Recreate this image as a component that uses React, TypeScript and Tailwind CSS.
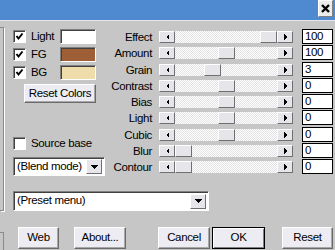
import React from "react";

const raised =
  "border border-t-white border-l-white border-r-[#707070] border-b-[#707070] bg-[#e6e6ea]";
const sunken =
  "border border-t-[#808080] border-l-[#808080] border-r-white border-b-white shadow-[inset_1px_1px_0_#404040]";

type Row = { label: string; value: string; thumb: number; h: string };

// thumb = px offset of the thumb inside the 102px track
const rows: Row[] = [
  { label: "Effect", value: "100", thumb: 85, h: "h-[16px]" },
  { label: "Amount", value: "100", thumb: 43, h: "h-[17px]" },
  { label: "Grain", value: "3", thumb: 29, h: "h-[16px]" },
  { label: "Contrast", value: "0", thumb: 43, h: "h-[16px]" },
  { label: "Bias", value: "0", thumb: 43, h: "h-[16px]" },
  { label: "Light", value: "0", thumb: 43, h: "h-[17px]" },
  { label: "Cubic", value: "0", thumb: 43, h: "h-[16px]" },
  { label: "Blur", value: "0", thumb: 0, h: "h-[16px]" },
  { label: "Contour", value: "0", thumb: 0, h: "h-[16px]" },
];

function Arrow({ dir }: { dir: "left" | "right" | "down" }) {
  const pts =
    dir === "left" ? "3,0 3,6 0,3" : dir === "right" ? "0,0 0,6 3,3" : "0,0 7,0 3.5,4";
  const w = dir === "down" ? 7 : 3;
  const h = dir === "down" ? 4 : 6;
  return (
    <svg width={w} height={h} viewBox={`0 0 ${w} ${h}`} shapeRendering="crispEdges">
      <polygon points={pts} fill="#000" />
    </svg>
  );
}

function Checkbox({ checked }: { checked?: boolean }) {
  return (
    <div className={`flex h-[13px] w-[13px] shrink-0 items-center justify-center bg-white ${sunken}`}>
      {checked && (
        <svg width="9" height="9" viewBox="0 0 9 9">
          <polyline points="1.5,4 3.5,6.5 7.5,1.5" fill="none" stroke="#000" strokeWidth="2" />
        </svg>
      )}
    </div>
  );
}

function Swatch({ color }: { color: string }) {
  return <div className={`h-[15px] w-[36px] ${sunken} ${color}`} />;
}

function Dropdown({ text, width, h }: { text: string; width: string; h: string }) {
  return (
    <div className={`flex items-center bg-white pl-[3px] pr-[2px] ${sunken} ${width} ${h}`}>
      <span className="flex-1 whitespace-nowrap leading-none">{text}</span>
      <div className={`flex h-[15px] w-[16px] items-center justify-center ${raised}`}>
        <Arrow dir="down" />
      </div>
    </div>
  );
}

function Slider({ thumb }: { thumb: number }) {
  return (
    <div className="mt-[2px] flex h-[12px] w-[134px]">
      <div className={`flex w-[16px] items-center justify-center ${raised}`}>
        <Arrow dir="left" />
      </div>
      <div className="flex w-[102px] bg-[repeating-conic-gradient(#ffffff_0_25%,#e2e2e2_0_50%)] bg-[length:2px_2px]">
        <div className={`h-full w-[17px] ${raised}`} style={{ marginLeft: thumb }} />
      </div>
      <div className={`flex w-[16px] items-center justify-center ${raised}`}>
        <Arrow dir="right" />
      </div>
    </div>
  );
}

function Button({
  label,
  width,
  h = "h-[22px]",
  ml = "",
  main,
}: {
  label: string;
  width: string;
  h?: string;
  ml?: string;
  main?: boolean;
}) {
  return (
    <button
      className={`${h} ${width} ${ml} whitespace-nowrap bg-[#ececf2] leading-none ${
        main
          ? "border border-black shadow-[inset_1px_1px_0_#fff,inset_-1px_-1px_0_#808080]"
          : "border border-t-white border-l-white border-r-[#6a6a6a] border-b-[#6a6a6a] shadow-[inset_-1px_-1px_0_#a8a8a8]"
      }`}
    >
      {label}
    </button>
  );
}

export default function App() {
  return (
    <div className="h-[250px] w-[335px] overflow-hidden bg-[#c6c6c6] font-['Liberation_Sans',Arial,sans-serif] text-[11.5px] tracking-[-0.35px] text-black">
      {/* title bar */}
      <div className="flex h-[21px] justify-end border-b border-[#e4e8ee] bg-[#4f89cf]">
        <div className="mr-[2px] flex h-[17px] w-[15px] items-center justify-center border border-t-white border-l-white border-r-[#808080] border-b-[#808080] bg-[#ececec]">
          <svg width="9" height="9" viewBox="0 0 9 9">
            <path d="M1 1L8 8M8 1L1 8" stroke="#000" strokeWidth="2.4" />
          </svg>
        </div>
      </div>

      <div className="flex">
        {/* edge of neighbouring frame */}
        <div className="mt-[6px] h-[184px] w-[4px] border-y border-r border-[#8a8a8a] shadow-[1px_1px_0_#fff]" />

        <div className="pl-[9px] pt-[8px]">
          <div className="flex">
            {/* left column */}
            <div className="flex w-[92px] flex-col">
              {[
                ["Light", "bg-white"],
                ["FG", "bg-[#9e5e36]"],
                ["BG", "bg-[#eedcab]"],
              ].map(([l, c], i) => (
                <div key={l} className={`flex h-[15px] items-center ${i ? "mt-[3px]" : ""}`}>
                  <Checkbox checked />
                  <span className="ml-[5px] w-[29px] whitespace-nowrap">{l}</span>
                  <Swatch color={c} />
                </div>
              ))}
              <div className="ml-[11px] mt-[4px] flex">
                <Button label="Reset Colors" width="w-[72px]" h="h-[19px]" />
              </div>
              <div className="mt-[34px] flex h-[13px] items-center">
                <Checkbox />
                <span className="ml-[5px] whitespace-nowrap">Source base</span>
              </div>
              <div className="mt-[7px]">
                <Dropdown text="(Blend mode)" width="w-[92px]" h="h-[19px]" />
              </div>
            </div>

            {/* sliders */}
            <div className="flex flex-col">
              {rows.map((r) => (
                <div key={r.label} className={`flex items-start ${r.h}`}>
                  <span className="w-[47px] whitespace-nowrap text-right leading-[16px]">{r.label}</span>
                  <div className="ml-[7px]">
                    <Slider thumb={r.thumb} />
                  </div>
                  <div className="ml-[9px] h-[15px] w-[31px] border border-black bg-white pl-[2px] leading-[13px]">
                    {r.value}
                  </div>
                </div>
              ))}
            </div>
          </div>

          <div className="mt-[15px]">
            <Dropdown text="(Preset menu)" width="w-[196px]" h="h-[20px]" />
          </div>
        </div>
      </div>

      {/* buttons */}
      <div className="mt-[16px] flex">
        <div className="mt-[5px] h-[20px] w-[4px] border-r border-t border-[#8a8a8a]" />
        <Button label="Web" width="w-[41px]" ml="ml-[14px]" />
        <Button label="About..." width="w-[52px]" ml="ml-[15px]" />
        <Button label="Cancel" width="w-[52px]" ml="ml-[32px]" />
        <Button label="OK" width="w-[53px]" ml="ml-[2px]" main />
        <Button label="Reset" width="w-[51px]" ml="ml-[17px]" />
      </div>
    </div>
  );
}
